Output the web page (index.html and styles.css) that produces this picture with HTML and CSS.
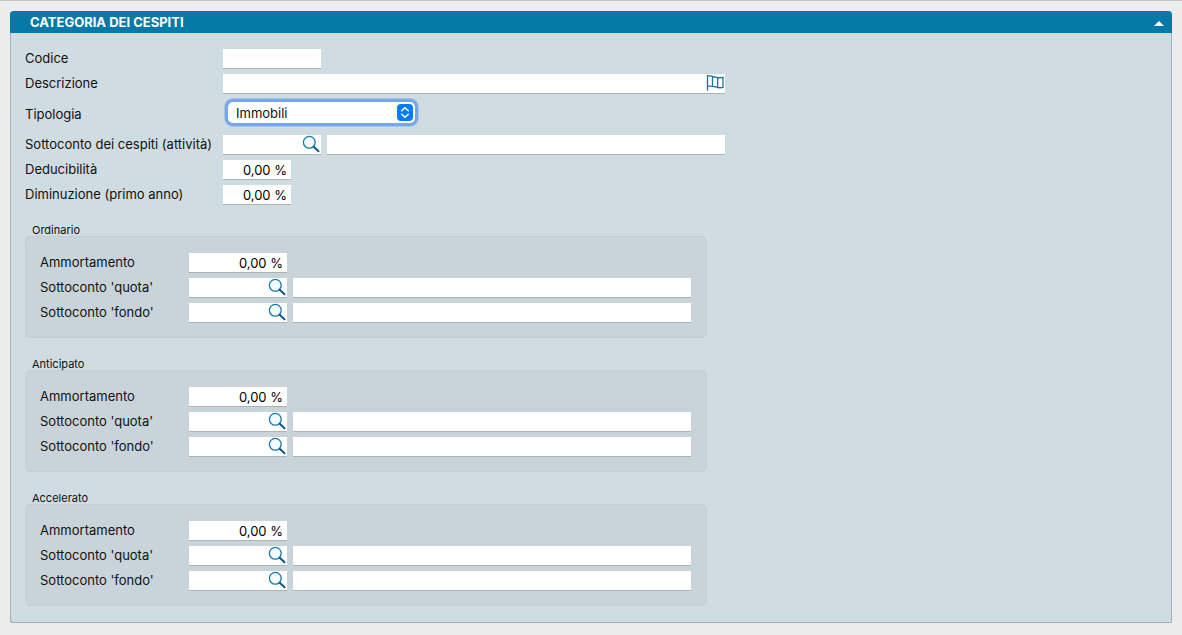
FILE: index.html
```html
<!DOCTYPE html>
<html lang="it">
  <head>
    <meta charset="utf-8" />
    <meta name="viewport" content="width=device-width,initial-scale=1.0" />
    <title>Categoria dei cespiti</title>
    <link rel="stylesheet" href="styles.css">
  </head>
  <body>
    <svg class="symbols" aria-hidden="true">
      <symbol id="search" viewBox="0 0 18 18">
        <circle cx="7.300" cy="7.300" r="5.900" fill="#f4fbff" stroke="#1d78a6" stroke-width="1.300" />
        <path d="M11.700 11.700l4.800 4.600" stroke="#0c5688" stroke-width="2" stroke-linecap="round" />
      </symbol>
    </svg>
    <form class="panel">
      <header class="panel-header">
        <h1>CATEGORIA DEI CESPITI</h1>
        <button class="collapse" type="button" title="Chiudi">
          <svg width="10" height="5" viewBox="0 0 10 5"><path d="M0 5L5 0l5 5z" fill="#fff" /></svg>
        </button>
      </header>
      <div class="panel-body">
        <div class="row">
          <label for="codice">Codice</label>
          <input class="code" id="codice" type="text" />
        </div>
        <div class="row">
          <label for="descrizione">Descrizione</label>
          <div class="lookup wide">
            <input id="descrizione" type="text" />
            <button type="button" title="Traduzioni">
              <svg width="18" height="18" viewBox="0 0 18 18" fill="none" stroke="#1b719e" stroke-width="1.300">
                <path d="M1.500 1v15.500M1.500 2c3-.4 5 .3 8 1.200s4.500.8 7.500.2v10c-3 .8-5 .3-7.500-.5s-5-1.100-8-.7M6.500 2.300v10M11.700 3.700v9.800" />
              </svg>
            </button>
          </div>
        </div>
        <div class="row row-select">
          <label for="tipologia">Tipologia</label>
          <div class="select">
            <select id="tipologia">
              <option>Immobili</option>
            </select>
            <svg width="16" height="17" viewBox="0 0 16 17" fill="none">
              <rect width="16" height="17" rx="4" fill="#0a7aff" />
              <path d="M4.700 6.800L8 3.700l3.300 3.100M4.700 10.200L8 13.300l3.300-3.100" stroke="#fff" stroke-width="1.500" stroke-linecap="round" stroke-linejoin="round" />
            </svg>
          </div>
        </div>
        <div class="row">
          <label for="cespiti">Sottoconto dei cespiti (attività)</label>
          <div class="lookup code">
            <input id="cespiti" type="text" />
            <button type="button" title="Cerca"><svg width="18" height="18"><use href="#search" /></svg></button>
          </div>
          <input class="wide" type="text" aria-label="Descrizione sottoconto dei cespiti" />
        </div>
        <div class="row">
          <label for="deducibilita">Deducibilità</label>
          <input class="percent number" id="deducibilita" type="text" value="0,00 %" />
        </div>
        <div class="row">
          <label for="diminuzione">Diminuzione (primo anno)</label>
          <input class="percent number" id="diminuzione" type="text" value="0,00 %" />
        </div>

        <fieldset class="group">
          <legend>Ordinario</legend>
          <div class="group-box">
            <div class="row">
              <label for="ord-amm">Ammortamento</label>
              <input class="code number" id="ord-amm" type="text" value="0,00 %" />
            </div>
            <div class="row">
              <label for="ord-quota">Sottoconto 'quota'</label>
              <div class="lookup code">
                <input id="ord-quota" type="text" />
                <button type="button" title="Cerca"><svg width="18" height="18"><use href="#search" /></svg></button>
              </div>
              <input class="wide" type="text" aria-label="Descrizione sottoconto quota" />
            </div>
            <div class="row">
              <label for="ord-fondo">Sottoconto 'fondo'</label>
              <div class="lookup code">
                <input id="ord-fondo" type="text" />
                <button type="button" title="Cerca"><svg width="18" height="18"><use href="#search" /></svg></button>
              </div>
              <input class="wide" type="text" aria-label="Descrizione sottoconto fondo" />
            </div>
          </div>
        </fieldset>

        <fieldset class="group">
          <legend>Anticipato</legend>
          <div class="group-box">
            <div class="row">
              <label for="ant-amm">Ammortamento</label>
              <input class="code number" id="ant-amm" type="text" value="0,00 %" />
            </div>
            <div class="row">
              <label for="ant-quota">Sottoconto 'quota'</label>
              <div class="lookup code">
                <input id="ant-quota" type="text" />
                <button type="button" title="Cerca"><svg width="18" height="18"><use href="#search" /></svg></button>
              </div>
              <input class="wide" type="text" aria-label="Descrizione sottoconto quota" />
            </div>
            <div class="row">
              <label for="ant-fondo">Sottoconto 'fondo'</label>
              <div class="lookup code">
                <input id="ant-fondo" type="text" />
                <button type="button" title="Cerca"><svg width="18" height="18"><use href="#search" /></svg></button>
              </div>
              <input class="wide" type="text" aria-label="Descrizione sottoconto fondo" />
            </div>
          </div>
        </fieldset>

        <fieldset class="group">
          <legend>Accelerato</legend>
          <div class="group-box">
            <div class="row">
              <label for="acc-amm">Ammortamento</label>
              <input class="code number" id="acc-amm" type="text" value="0,00 %" />
            </div>
            <div class="row">
              <label for="acc-quota">Sottoconto 'quota'</label>
              <div class="lookup code">
                <input id="acc-quota" type="text" />
                <button type="button" title="Cerca"><svg width="18" height="18"><use href="#search" /></svg></button>
              </div>
              <input class="wide" type="text" aria-label="Descrizione sottoconto quota" />
            </div>
            <div class="row">
              <label for="acc-fondo">Sottoconto 'fondo'</label>
              <div class="lookup code">
                <input id="acc-fondo" type="text" />
                <button type="button" title="Cerca"><svg width="18" height="18"><use href="#search" /></svg></button>
              </div>
              <input class="wide" type="text" aria-label="Descrizione sottoconto fondo" />
            </div>
          </div>
        </fieldset>
      </div>
    </form>
  </body>
</html>
```

FILE: styles.css
```css
* {
  box-sizing: border-box;
}
body {
  margin: 0;
  padding: 10px;
  border-top: 1px solid #c4c4c4;
  background: #ececec;
  color: #111;
  font-family: Inter, "Liberation Sans", sans-serif;
  font-size: 13px;
}
input,
select,
button {
  margin: 0;
  padding: 0;
  border: none;
  font-family: inherit;
}
.symbols {
  display: none;
}

.panel {
  border-radius: 4px 4px 2px 2px;
  background: #cfdce2;
  box-shadow: inset 1px -1px #a3b1b8, inset -1px 0 #a3b1b8;
}
.panel-header {
  display: flex;
  justify-content: space-between;
  align-items: center;
  height: 22px;
  padding: 0 8px 0 20px;
  border-radius: 4px 4px 0 0;
  background: #0679a7;
  color: #fff;
}
.panel-header h1 {
  margin: 0;
  font-size: 13px;
  font-weight: 700;
}
.collapse {
  display: flex;
  padding: 3px 0 0;
  background: none;
}
.panel-body {
  padding: 16px 15px 17px;
}

.row {
  display: flex;
  align-items: center;
  gap: 6px;
  width: 100%;
  max-width: 700px;
  height: 20px;
  margin-bottom: 5px;
}
.row label {
  flex: none;
  width: 192px;
  padding-bottom: 2px;
  white-space: nowrap;
}
.row input {
  height: 20px;
  padding: 0 4px;
  background: #fff;
  border-bottom: 1px solid #a9b4b9;
  font-size: 13px;
  outline: none;
}
.row .code {
  flex: none;
  width: 98px;
}
.row .percent {
  width: 68px;
}
.row .number {
  padding-top: 1px;
  text-align: right;
}
.row .wide {
  flex: 1;
  min-width: 0;
}

/* text box with a button at its right end */
.lookup {
  position: relative;
  display: flex;
}
.lookup input {
  width: 100%;
}
.lookup button {
  position: absolute;
  top: 0;
  right: 1px;
  display: flex;
  background: none;
}

.row-select {
  height: 31px;
}
.select {
  position: relative;
  margin: 0 0 4px 5px;
}
.select select {
  display: block;
  width: 187px;
  height: 21px;
  padding: 0 8px;
  border-radius: 5px;
  background: #fff;
  box-shadow: 0 0 0 3px #75a7e9, 0 0 0 4px #a9c4e6;
  color: #111;
  font-size: 13px;
  appearance: none;
}
.select svg {
  position: absolute;
  top: 2px;
  right: 2px;
  pointer-events: none;
}

.group {
  max-width: 682px;
  margin: 18px 0 0;
  padding: 0;
  border: none;
}
.group + .group {
  margin-top: 19px;
}
.group legend {
  padding: 1px 7px 0;
  font-size: 11px;
  line-height: 12px;
}
.group-box {
  padding: 16px 15px 14px 14px;
  border: 1px solid #c2ced4;
  border-radius: 5px;
  background: #c8d4da;
}
.group-box .row label {
  width: 143px;
}
.group-box .row:last-child {
  margin-bottom: 0;
}
```
